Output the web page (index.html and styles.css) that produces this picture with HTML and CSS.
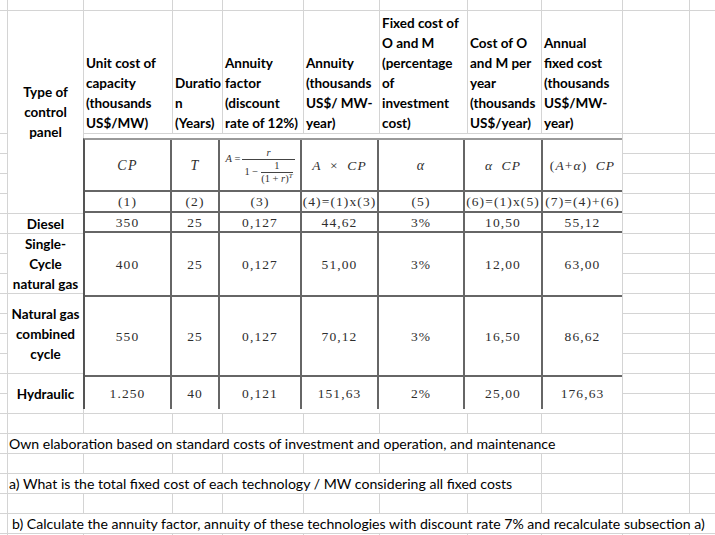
FILE: index.html
```html
<!DOCTYPE html>
<html lang="en">
<head>
<meta charset="utf-8">
<title>Fixed costs of technologies</title>
<link rel="stylesheet" href="styles.css">
</head>
<body>
<div class="sheet">
  <!-- row 0 -->
  <span></span><span></span><span></span><span></span><span></span><span></span><span></span><span></span><span></span><span></span><span></span>
  <!-- row 1 : headers -->
  <span></span>
  <div class="lbl rows5">Type of<br>control<br>panel</div>
  <div class="hd">Unit cost of<br>capacity<br>(thousands<br>US$/MW)</div>
  <div class="hd">Duratio<br>n<br>(Years)</div>
  <div class="hd">Annuity<br>factor<br>(discount<br>rate of 12%)</div>
  <div class="hd">Annuity<br>(thousands<br>US$/ MW-<br>year)</div>
  <div class="hd">Fixed cost of<br>O and M<br>(percentage<br>of<br>investment<br>cost)</div>
  <div class="hd">Cost of O<br>and M per<br>year<br>(thousands<br>US$/year)</div>
  <div class="hd">Annual<br>fixed cost<br>(thousands<br>US$/MW-<br>year)</div>
  <span></span><span></span>
  <!-- rows 2-5 -->
  <span></span><span></span><span></span>
  <span></span><span></span><span></span>
  <span></span><span></span><span></span>
  <span></span><span></span><span></span>
  <!-- row 6 -->
  <span></span><div class="lbl">Diesel</div><span></span><span></span>
  <!-- rows 7-9 -->
  <span></span><div class="lbl rows3">Single-<br>Cycle<br>natural gas</div><span></span><span></span>
  <span></span><span></span><span></span>
  <span></span><span></span><span></span>
  <!-- rows 10-13 -->
  <span></span><div class="lbl rows4">Natural gas<br>combined<br>cycle</div><span></span><span></span>
  <span></span><span></span><span></span>
  <span></span><span></span><span></span>
  <span></span><span></span><span></span>
  <!-- rows 14-15 -->
  <span></span><div class="lbl rows2">Hydraulic</div><span></span><span></span>
  <span></span><span></span><span></span>
  <!-- row 16 -->
  <span></span><span></span><span></span><span></span><span></span><span></span><span></span><span></span><span></span><span></span><span></span>
  <!-- row 17 -->
  <span></span><div class="note cols8">Own elaboration based on standard costs of investment and operation, and maintenance</div><span></span><span></span>
  <!-- row 18 -->
  <span></span><span></span><span></span><span></span><span></span><span></span><span></span><span></span><span></span><span></span><span></span>
  <!-- row 19 -->
  <span></span><div class="note cols7">a) What is the total fixed cost of each technology / MW considering all fixed costs</div><span></span><span></span><span></span>
  <!-- row 20 -->
  <span></span><span></span><span></span><span></span><span></span><span></span><span></span><span></span><span></span><span></span><span></span>
  <!-- row 21 -->
  <span></span><div class="note cols10 indent">b) Calculate the annuity factor, annuity of these technologies with discount rate 7% and recalculate subsection a)</div>
  <!-- row 22 -->
  <span></span><span></span><span></span><span></span><span></span><span></span><span></span><span></span><span></span><span></span><span></span>

  <!-- embedded picture of the cost table -->
  <div class="pic">
    <div class="tbl">
      <div class="sym"><span><i>CP</i></span></div>
      <div class="sym"><span><i>T</i></span></div>
      <div>
        <span class="formula">
          <span class="lhs"><i>A</i> =</span>
          <span class="frac">
            <span class="num"><i>r</i></span>
            <span class="den"><span>1 −</span>
              <span class="frac inner">
                <span class="num">1</span>
                <span class="den">(1 + <i>r</i>)<sup><i>T</i></sup></span>
              </span>
            </span>
          </span>
        </span>
      </div>
      <div class="ws"><span><i>A</i> × <i>CP</i></span></div>
      <div class="sym"><span><i>α</i></span></div>
      <div class="ws"><span><i>α</i> <i>CP</i></span></div>
      <div class="ws"><span>(<i>A</i>+<i>α</i>) <i>CP</i></span></div>

      <div>(1)</div><div>(2)</div><div>(3)</div><div>(4)=(1)x(3)</div><div>(5)</div><div>(6)=(1)x(5)</div><div>(7)=(4)+(6)</div>
      <div>350</div><div>25</div><div>0,127</div><div>44,62</div><div>3%</div><div>10,50</div><div>55,12</div>
      <div>400</div><div>25</div><div>0,127</div><div>51,00</div><div>3%</div><div>12,00</div><div>63,00</div>
      <div>550</div><div>25</div><div>0,127</div><div>70,12</div><div>3%</div><div>16,50</div><div>86,62</div>
      <div>1.250</div><div>40</div><div>0,121</div><div>151,63</div><div>2%</div><div>25,00</div><div>176,63</div>
    </div>
  </div>
</div>
</body>
</html>
```
FILE: styles.css
```css
html, body {
  margin: 0;
  padding: 0;
  background: #fff;
}

body {
  font-family: Lato, "Liberation Sans", sans-serif;
  color: #000;
}

.sheet {
  display: grid;
  grid-template-columns: 7px 75px 88px 49px 80px 75px 87px 73px 80px 66px 25px;
  grid-template-rows: 10px 122px repeat(21, 19px);
  gap: 1px;
  background: #d4d4d4;
  width: 715px;
  height: 535px;
  overflow: hidden;
}

.sheet > * {
  background: #fff;
}

.hd {
  display: flex;
  align-items: flex-end;
  padding-left: 2px;
  font-weight: 700;
  font-size: 13.5px;
  line-height: 20px;
  white-space: nowrap;
}

.lbl {
  display: flex;
  align-items: center;
  justify-content: center;
  text-align: center;
  font-weight: 700;
  font-size: 13.5px;
  line-height: 20px;
  white-space: nowrap;
}

.rows5 { grid-row: span 5; }
.rows4 { grid-row: span 4; }
.rows3 { grid-row: span 3; }
.rows2 { grid-row: span 2; }

.note {
  display: flex;
  align-items: center;
  padding-left: 1px;
  font-size: 14.1px;
  white-space: nowrap;
}

.cols7 { grid-column: span 7; }
.cols8 { grid-column: span 8; }
.cols10 { grid-column: span 10; }
.indent { padding-left: 4px; }

/* embedded picture */
.pic {
  grid-row: 3 / 17;
  grid-column: 3 / 10;
}

.tbl {
  box-sizing: border-box;
  width: 539px;
  margin: 4px 0 0 -1px;
  display: grid;
  grid-template-columns: 85px 46px 80px 75px 84px 76px 79px;
  grid-template-rows: 50px 19px 18px 62px 78px 32px;
  gap: 2px;
  background: #666;
  border-top: 2px solid #999;
  border-left: 2px solid #555;
}

.tbl > div {
  background: #fff;
  display: flex;
  align-items: center;
  justify-content: center;
  font-family: "Liberation Serif", "Times New Roman", serif;
  font-size: 13.5px;
  letter-spacing: 1.1px;
  color: #2e2e2e;
  white-space: nowrap;
  padding-top: 1px;
}

.tbl > .sym {
  font-size: 14px;
  letter-spacing: 1.4px;
}

.tbl > .ws {
  word-spacing: 4px;
}

.formula {
  display: flex;
  align-items: flex-start;
  font-size: 10.5px;
  line-height: 10px;
  letter-spacing: 0;
  word-spacing: 0;
  color: #333;
}

.formula .lhs {
  margin-top: 6px;
  margin-right: 2px;
}

.frac {
  display: flex;
  flex-direction: column;
  align-items: center;
}

.frac > .num {
  padding-bottom: 1px;
}

.frac > .den {
  border-top: 1px solid #444;
  padding: 1px 2px 0;
  display: flex;
  align-items: center;
  gap: 3px;
}

.frac.inner > .den {
  padding: 1px 0 0;
  display: block;
}

.formula sup {
  font-size: 7px;
  vertical-align: 4px;
  line-height: 0;
}
```
